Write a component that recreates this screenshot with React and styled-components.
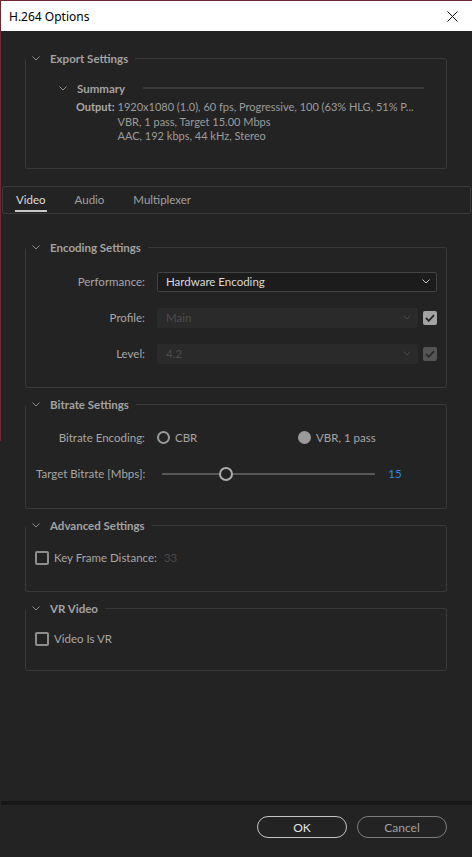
import React from "react";
import styled, { createGlobalStyle } from "styled-components";

const GlobalStyle = createGlobalStyle`
  html, body {
    margin: 0;
    padding: 0;
    background: #232323;
  }
  body {
    font-family: Lato, "Open Sans", sans-serif;
  }
`;

const Window = styled.div`
  width: 472px;
  height: 857px;
  box-sizing: border-box;
  display: flex;
  flex-direction: column;
  background: #232323;
  border-style: solid;
  border-width: 1px 0 0 1px;
  border-image: linear-gradient(to bottom, #6b2a33 0, #6b2a33 440px, #232323 440px) 1;
  overflow: hidden;
`;

const TitleBar = styled.div`
  height: 30px;
  flex: none;
  display: flex;
  align-items: center;
  justify-content: space-between;
  padding: 0 14px 0 8px;
  background: #fff;
`;

const Title = styled.span`
  font-family: "Noto Sans", "Open Sans", sans-serif;
  font-size: 12px;
  color: #000;
`;

const CloseIcon = () => (
  <svg width="11" height="11" viewBox="0 0 11 11">
    <path d="M0.5 0.5 L10.5 10.5 M10.5 0.5 L0.5 10.5" stroke="#111" strokeWidth="1" />
  </svg>
);

const Chevron = ({ color = "#8c8c8c" }) => (
  <svg width="8" height="5" viewBox="0 0 8 5">
    <path d="M0.5 0.5 L4 4 L7.5 0.5" fill="none" stroke={color} strokeWidth="1" />
  </svg>
);

const Content = styled.div`
  flex: 1;
  display: flex;
  flex-direction: column;
`;

const Group = styled.fieldset`
  margin: ${(p) => p.$mt}px 25px 0 24px;
  padding: ${(p) => p.$pt}px 0 ${(p) => p.$pb}px 0;
  border: 1px solid #393939;
  border-radius: 3px;
  min-width: 0;
`;

const GroupBody = styled.div`
  padding: 0 9px;
`;

const Legend = styled.legend`
  display: flex;
  align-items: center;
  gap: 10px;
  margin-left: 0;
  padding: 0 7px 0 6px;
  height: 14px;
  font-size: 11.5px;
  font-weight: 700;
  color: #a2a2a2;
`;

const SummaryRow = styled.div`
  display: flex;
  align-items: center;
  height: 14px;
  padding-left: 24px;
  gap: 10px;
  font-size: 11.5px;
  font-weight: 700;
  color: #a2a2a2;
`;

const SummaryLine = styled.div`
  flex: 1;
  height: 2px;
  margin: 0 13px 0 8px;
  background: #3a3a3a;
`;

const OutputGrid = styled.div`
  display: grid;
  grid-template-columns: auto 1fr;
  column-gap: 3px;
  margin-top: 5px;
  padding-left: 41px;
  font-size: 11px;
  line-height: 14.5px;
  color: #9c9c9c;
`;

const OutputLabel = styled.span`
  font-weight: 700;
  color: #a8a8a8;
`;

const OutputLines = styled.div`
  display: flex;
  flex-direction: column;
  white-space: nowrap;
`;

const TabBar = styled.div`
  margin: 17px 1px 0 1px;
  height: 26px;
  border: 1px solid #3a3a3a;
  border-radius: 2px;
  display: flex;
  align-items: stretch;
  gap: 27px;
  padding-left: 12px;
`;

const Tab = styled.div`
  display: flex;
  align-items: center;
  padding: 2px 1px 0;
  font-size: 11.5px;
  color: ${(p) => (p.$active ? "#dedede" : "#a0a0a0")};
  border-bottom: 2px solid ${(p) => (p.$active ? "#c9c9c9" : "transparent")};
  margin-bottom: 1px;
`;

const FormRows = styled.div`
  display: flex;
  flex-direction: column;
  gap: ${(p) => p.$gap}px;
`;

const FieldRow = styled.div`
  display: grid;
  grid-template-columns: 110px 1fr;
  column-gap: 12px;
  align-items: center;
  height: ${(p) => p.$h || 20}px;
`;

const Label = styled.span`
  text-align: right;
  font-size: 11.5px;
  color: #a6a6a6;
  white-space: nowrap;
`;

const FieldWithCheck = styled.div`
  display: flex;
  align-items: center;
  gap: 5px;
`;

const Select = styled.div`
  flex: 1;
  height: 20px;
  box-sizing: border-box;
  display: flex;
  align-items: center;
  justify-content: space-between;
  padding: 0 6px 0 8px;
  border-radius: 2px;
  font-size: 11.5px;
  background: ${(p) => (p.$disabled ? "#2a2a2a" : "#1c1c1c")};
  border: 1px solid ${(p) => (p.$disabled ? "#2a2a2a" : "#434343")};
  color: ${(p) => (p.$disabled ? "#4c4c4c" : "#dadada")};
`;

const CheckBox = styled.div`
  width: 14px;
  height: 14px;
  flex: none;
  box-sizing: border-box;
  border-radius: 2px;
  display: flex;
  align-items: center;
  justify-content: center;
  background: ${(p) => (p.$checked ? p.$tone : "transparent")};
  border: ${(p) => (p.$checked ? "none" : "2px solid #8e8e8e")};
`;

const CheckMark = ({ color }) => (
  <svg width="10" height="8" viewBox="0 0 10 8">
    <path d="M1 4 L3.8 6.8 L9 1.2" fill="none" stroke={color} strokeWidth="1.8" />
  </svg>
);

const RadioGroup = styled.div`
  display: flex;
  align-items: center;
`;

const RadioOption = styled.div`
  display: flex;
  align-items: center;
  gap: 5px;
  width: ${(p) => (p.$w ? `${p.$w}px` : "auto")};
  font-size: 11.5px;
  color: #a6a6a6;
`;

const RadioDot = styled.div`
  width: 13px;
  height: 13px;
  box-sizing: border-box;
  border-radius: 50%;
  border: 2px solid #9a9a9a;
  background: ${(p) => (p.$on ? "#9a9a9a" : "transparent")};
`;

const SliderRow = styled.div`
  display: flex;
  align-items: center;
  height: 16px;
  padding-left: 1px;
`;

const SliderTrack = styled.div`
  position: relative;
  width: 213px;
  height: 2px;
  margin-left: 17px;
  background: #575757;
`;

const SliderThumb = styled.div`
  position: absolute;
  top: -6px;
  width: 14px;
  height: 14px;
  box-sizing: border-box;
  border-radius: 50%;
  border: 2px solid #acacac;
  background: #232323;
  transform: translateX(-7px);
`;

const ValueText = styled.span`
  margin-left: ${(p) => (p.$ml !== undefined ? p.$ml : 13)}px;
  font-size: 11.5px;
  color: ${(p) => p.$color || "#a6a6a6"};
`;

const CheckRow = styled.div`
  display: flex;
  align-items: center;
  gap: 5px;
  height: 14px;
  font-size: 11.5px;
  color: #a6a6a6;
`;

const Spacer = styled.div`
  flex: 1;
`;

const FooterRule = styled.div`
  height: 4px;
  background: #171717;
  flex: none;
`;

const ButtonBar = styled.div`
  flex: none;
  height: 52px;
  box-sizing: border-box;
  display: flex;
  justify-content: flex-end;
  gap: 10px;
  padding: 11px 25px 0 0;
`;

const Button = styled.button`
  width: 90px;
  height: 22px;
  border-radius: 11px;
  background: transparent;
  font-family: Lato, "Open Sans", sans-serif;
  font-size: 12px;
  padding: 0;
  border: 1.5px solid ${(p) => (p.$primary ? "#c4c4c4" : "#7c7c7c")};
  color: ${(p) => (p.$primary ? "#e2e2e2" : "#a0a0a0")};
`;

export default function App() {
  const bitrate = 15;
  const max = 50;
  return (
    <>
      <GlobalStyle />
      <Window>
        <TitleBar>
          <Title>H.264 Options</Title>
          <CloseIcon />
        </TitleBar>
        <Content>
          <Group $mt={20} $pt={16} $pb={24}>
            <Legend>
              <Chevron />
              Export Settings
            </Legend>
            <GroupBody>
              <SummaryRow>
                <Chevron />
                Summary
                <SummaryLine />
              </SummaryRow>
              <OutputGrid>
                <OutputLabel>Output:</OutputLabel>
                <OutputLines>
                  <span>1920x1080 (1.0), 60 fps, Progressive, 100 (63% HLG, 51% P...</span>
                  <span>VBR, 1 pass, Target 15.00 Mbps</span>
                  <span>AAC, 192 kbps, 44 kHz, Stereo</span>
                </OutputLines>
              </OutputGrid>
            </GroupBody>
          </Group>

          <TabBar>
            <Tab $active>Video</Tab>
            <Tab>Audio</Tab>
            <Tab>Multiplexer</Tab>
          </TabBar>

          <Group $mt={27} $pt={17} $pb={23}>
            <Legend>
              <Chevron />
              Encoding Settings
            </Legend>
            <GroupBody>
              <FormRows $gap={16}>
                <FieldRow>
                  <Label>Performance:</Label>
                  <Select>
                    Hardware Encoding
                    <Chevron color="#c8c8c8" />
                  </Select>
                </FieldRow>
                <FieldRow>
                  <Label>Profile:</Label>
                  <FieldWithCheck>
                    <Select $disabled>
                      Main
                      <Chevron color="#4a4a4a" />
                    </Select>
                    <CheckBox $checked $tone="#a3a3a3">
                      <CheckMark color="#262626" />
                    </CheckBox>
                  </FieldWithCheck>
                </FieldRow>
                <FieldRow>
                  <Label>Level:</Label>
                  <FieldWithCheck>
                    <Select $disabled>
                      4.2
                      <Chevron color="#4a4a4a" />
                    </Select>
                    <CheckBox $checked $tone="#545454">
                      <CheckMark color="#2c2c2c" />
                    </CheckBox>
                  </FieldWithCheck>
                </FieldRow>
              </FormRows>
            </GroupBody>
          </Group>

          <Group $mt={10} $pt={18} $pb={26}>
            <Legend>
              <Chevron />
              Bitrate Settings
            </Legend>
            <GroupBody>
              <FormRows $gap={20}>
                <FieldRow $h={16}>
                  <Label>Bitrate Encoding:</Label>
                  <RadioGroup>
                    <RadioOption $w={141}>
                      <RadioDot />
                      CBR
                    </RadioOption>
                    <RadioOption>
                      <RadioDot $on />
                      VBR, 1 pass
                    </RadioOption>
                  </RadioGroup>
                </FieldRow>
                <SliderRow>
                  <Label>Target Bitrate [Mbps]:</Label>
                  <SliderTrack>
                    <SliderThumb style={{ left: `${(bitrate / max) * 100}%` }} />
                  </SliderTrack>
                  <ValueText $color="#2d8ceb">{bitrate}</ValueText>
                </SliderRow>
              </FormRows>
            </GroupBody>
          </Group>

          <Group $mt={10} $pt={18} $pb={26}>
            <Legend>
              <Chevron />
              Advanced Settings
            </Legend>
            <GroupBody>
              <CheckRow>
                <CheckBox />
                Key Frame Distance:
                <ValueText $color="#4a4a4a" $ml={2}>33</ValueText>
              </CheckRow>
            </GroupBody>
          </Group>

          <Group $mt={10} $pt={16} $pb={24}>
            <Legend>
              <Chevron />
              VR Video
            </Legend>
            <GroupBody>
              <CheckRow>
                <CheckBox />
                Video Is VR
              </CheckRow>
            </GroupBody>
          </Group>

          <Spacer />
          <FooterRule />
          <ButtonBar>
            <Button $primary>OK</Button>
            <Button>Cancel</Button>
          </ButtonBar>
        </Content>
      </Window>
    </>
  );
}
